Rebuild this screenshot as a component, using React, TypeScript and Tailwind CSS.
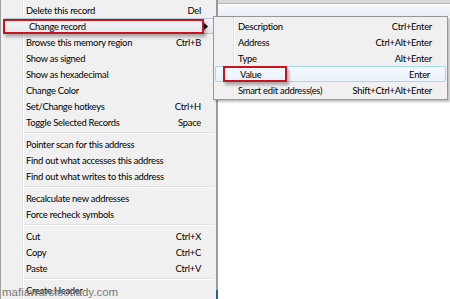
import React from "react";

type Item = { label: string; shortcut?: string; sub?: boolean; hl?: boolean } | "sep";

const mainItems: Item[] = [
  { label: "Delete this record", shortcut: "Del" },
  { label: "Change record", sub: true, hl: true },
  { label: "Browse this memory region", shortcut: "Ctrl+B" },
  { label: "Show as signed" },
  { label: "Show as hexadecimal" },
  { label: "Change Color" },
  { label: "Set/Change hotkeys", shortcut: "Ctrl+H" },
  { label: "Toggle Selected Records", shortcut: "Space" },
  "sep",
  { label: "Pointer scan for this address" },
  { label: "Find out what accesses this address" },
  { label: "Find out what writes to this address" },
  "sep",
  { label: "Recalculate new addresses" },
  { label: "Force recheck symbols" },
  "sep",
  { label: "Cut", shortcut: "Ctrl+X" },
  { label: "Copy", shortcut: "Ctrl+C" },
  { label: "Paste", shortcut: "Ctrl+V" },
  "sep",
  { label: "Create Header" },
];

const subItems: { label: string; shortcut: string; hl?: boolean }[] = [
  { label: "Description", shortcut: "Ctrl+Enter" },
  { label: "Address", shortcut: "Ctrl+Alt+Enter" },
  { label: "Type", shortcut: "Alt+Enter" },
  { label: "Value", shortcut: "Enter", hl: true },
  { label: "Smart edit address(es)", shortcut: "Shift+Ctrl+Alt+Enter" },
];

function Sep({ left }: { left: string }) {
  return (
    <div className={`h-[6px] flex flex-col justify-center ${left} mr-[2px]`}>
      <div className="h-px bg-[#e0e0e0]" />
      <div className="h-px bg-white" />
    </div>
  );
}

export default function App() {
  return (
    <div className="relative w-[450px] h-[299px] overflow-hidden bg-white font-['Lato',sans-serif] text-[9.4px] tracking-[-0.25px] leading-none text-black flex">
      {/* Main context menu */}
      <div className="relative w-[218px] h-full shrink-0 bg-[#f0f0f0] border-l border-[#a0a0a0] border-r-2 border-r-[#9a9a9a] pt-[2px]">
        <div className="absolute left-[21px] top-0 bottom-0 w-px bg-[#e2e3e3]" />
        <div className="absolute left-[22px] top-0 bottom-0 w-px bg-white" />
        {mainItems.map((it, i) =>
          it === "sep" ? (
            <Sep key={i} left="ml-[23px]" />
          ) : (
            <div
              key={i}
              className={`relative h-4 flex items-center justify-between pl-[25px] pr-[15px] ${
                it.hl
                  ? "mx-[2px] pl-[23px] pr-[13px] rounded-[2px] border border-[#b8c4d2] bg-gradient-to-b from-[#f3f5f8] to-[#e3e8ee]"
                  : ""
              }`}
            >
              <span className="pt-[1px]">{it.label}</span>
              {it.shortcut && <span className="pt-[1px]">{it.shortcut}</span>}
              {it.sub && (
                <svg className="absolute right-[5px] top-[4px]" width="4" height="7" viewBox="0 0 4 7">
                  <path d="M0 0 L4 3.5 L0 7 Z" fill="#000" />
                </svg>
              )}
            </div>
          )
        )}
      </div>

      {/* Background window area */}
      <div className="flex-1 flex flex-col">
        <div className="h-[3px] bg-[#d9d9d9]" />
        <div className="h-px bg-[#b8b8b8]" />
        <div className="h-[12px] bg-gradient-to-b from-[#f8fafc] to-[#e9eef5]" />
        <div className="flex-1 bg-white" />
      </div>

      {/* Submenu */}
      <div className="absolute left-[213px] top-[16px] w-[235px] bg-[#f0f0f0] border border-[#979797] shadow-[2px_2px_2px_rgba(0,0,0,0.25)] py-[1px]">
        <div className="absolute left-[19px] top-0 bottom-0 w-px bg-[#e2e3e3]" />
        <div className="absolute left-[20px] top-0 bottom-0 w-px bg-white" />
        {subItems.map((it, i) => (
          <div
            key={i}
            className={`relative h-4 flex items-center justify-between pl-[24px] pr-[15px] ${
              it.hl ? "mx-[1px] pl-[23px] pr-[14px] rounded-[2px] border border-[#a8d8eb] bg-gradient-to-b from-[#f4f9fd] to-[#eaf3fb]" : ""
            }`}
          >
            <span className="pt-[1px]">{it.label}</span>
            <span className="pt-[1px]">{it.shortcut}</span>
          </div>
        ))}
      </div>

      {/* Annotation red boxes */}
      <div className="absolute left-[3px] top-[19px] w-[201px] h-[15px] border-2 border-[#c8141e] shadow-[2px_3px_3px_rgba(0,0,0,0.3)]" />
      <div className="absolute left-[223px] top-[66px] w-[64px] h-[16px] border-2 border-[#c8141e] shadow-[2px_3px_3px_rgba(0,0,0,0.3)]" />

      {/* Taskbar sliver */}
      <div className="absolute left-[216px] top-[290px] w-[2px] h-[9px] bg-[#2a5ca8]" />

      {/* Watermark */}
      <div className="absolute left-[2px] top-[287px] font-['Liberation_Sans',sans-serif] text-[11.5px] tracking-normal leading-none text-[#7a7a7a]">
        mafiawarslootlady.com
      </div>
    </div>
  );
}
